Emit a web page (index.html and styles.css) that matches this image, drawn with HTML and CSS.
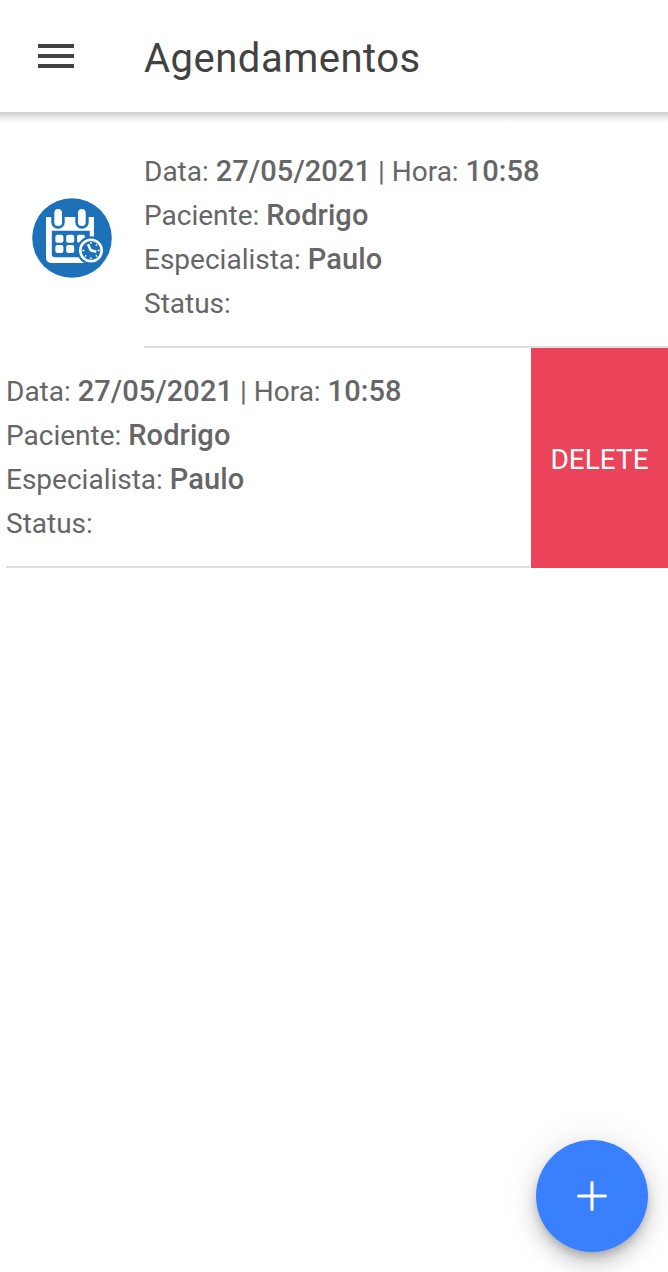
FILE: index.html
```html
<!DOCTYPE html>
<html lang="pt-BR">
<head>
<meta charset="utf-8">
<title>Agendamentos</title>
<link rel="stylesheet" href="styles.css">
</head>
<body>
<header class="toolbar">
  <button class="menu-button" aria-label="Menu">
    <svg width="36" height="24" viewBox="0 0 36 24"><path d="M0 0h36v4H0zM0 10h36v4H0zM0 20h36v4H0z"/></svg>
  </button>
  <h1 class="title">Agendamentos</h1>
</header>
<main class="list">
  <section class="item">
    <div class="avatar">
      <svg width="80" height="80" viewBox="0 0 80 80">
        <circle cx="40" cy="40" r="39.8" fill="#1d71b8"/>
        <path d="M14 19h48v46H19a5 5 0 0 1-5-5z" fill="#fff"/>
        <path d="M19.800 32.700h38v26.600H22.800a3 3 0 0 1-3-3z" fill="#1d71b8"/>
        <rect x="19.300" y="8" width="13.400" height="22.700" rx="6.500" fill="#1d71b8"/>
        <rect x="43.300" y="8" width="13.400" height="22.700" rx="6.500" fill="#1d71b8"/>
        <rect x="22.300" y="11" width="7.700" height="17" rx="3.850" fill="#fff"/>
        <rect x="46" y="11" width="7.700" height="17" rx="3.850" fill="#fff"/>
        <g fill="#fff">
          <rect x="23.400" y="36.700" width="8" height="8" rx="2"/>
          <rect x="34.200" y="36.700" width="8" height="8" rx="2"/>
          <rect x="45" y="36.700" width="8" height="8" rx="2"/>
          <rect x="23.400" y="47" width="8" height="8" rx="2"/>
          <rect x="34.200" y="47" width="8" height="8" rx="2"/>
        </g>
        <circle cx="59" cy="52.500" r="14.200" fill="#1d71b8"/>
        <circle cx="59" cy="52.500" r="10.700" fill="none" stroke="#fff" stroke-width="2.600"/>
        <path d="M56 46.300l2.700 5.900 5.600 1.500" fill="none" stroke="#fff" stroke-width="2.500"/>
        <path d="M59 44v2M59 59.200v2M50.300 52.500h2M65.700 52.500h2M52.900 58.600l1.300-1.300M63.800 57.300l1.300 1.300M63.800 47.700l1.300-1.300" stroke="#fff" stroke-width="1.300"/>
      </svg>
    </div>
    <div class="details">
      <p>Data: <b>27/05/2021</b> | Hora: <b>10:58</b></p>
      <p>Paciente: <b>Rodrigo</b></p>
      <p>Especialista: <b>Paulo</b></p>
      <p>Status:</p>
    </div>
  </section>
  <section class="item item-open">
    <div class="details">
      <p>Data: <b>27/05/2021</b> | Hora: <b>10:58</b></p>
      <p>Paciente: <b>Rodrigo</b></p>
      <p>Especialista: <b>Paulo</b></p>
      <p>Status:</p>
    </div>
    <button class="delete">DELETE</button>
  </section>
</main>
<button class="fab" aria-label="Adicionar">
  <svg width="32" height="32" viewBox="0 0 32 32"><path d="M16 2.500v27M2.500 16h27" fill="none" stroke="#fff" stroke-width="3" stroke-linecap="round"/></svg>
</button>
</body>
</html>
```
FILE: styles.css
```css
* { box-sizing: border-box; }

body {
  margin: 0;
  height: 1272px;
  overflow: hidden;
  background: #fff;
  font-family: Roboto, "Liberation Sans", sans-serif;
}

button {
  border: 0;
  padding: 0;
  background: none;
  font: inherit;
}

.toolbar {
  position: relative;
  display: flex;
  align-items: center;
  height: 112px;
  padding-left: 38px;
  color: #424242;
}

.toolbar::after {
  content: "";
  position: absolute;
  top: 100%;
  left: 0;
  right: 0;
  height: 12px;
  background: linear-gradient(#d0d0d0, #d8d8d8 20%, #ececec 50%, #f9f9f9 75%, #fff);
}

.menu-button {
  display: flex;
  width: 106px;
}

.menu-button svg { fill: #424242; }

.title {
  margin: 6px 0 0;
  font-size: 40px;
  font-weight: 400;
  line-height: 48px;
  letter-spacing: .5px;
}

.list { padding-top: 16px; }

.item {
  display: flex;
  height: 220px;
}

.item-open { padding-left: 6px; }

.avatar {
  display: flex;
  align-items: center;
  width: 144px;
  padding-left: 32px;
}

.details {
  flex: 1;
  padding-top: 22px;
  border-bottom: 2px solid #dedede;
  color: #666;
  font-size: 28px;
  line-height: 44px;
  white-space: nowrap;
}

.details p {
  height: 44px;
  margin: 0;
}

.details b {
  font-size: 29px;
  font-weight: 500;
  line-height: 1;
  letter-spacing: .08px;
}

.delete {
  width: 137px;
  margin-left: 1px;
  padding-top: 2px;
  background: #eb445a;
  color: #fff;
  font-size: 28px;
}

.fab {
  position: absolute;
  top: 1140px;
  left: 536px;
  display: flex;
  align-items: center;
  justify-content: center;
  width: 112px;
  height: 112px;
  border-radius: 50%;
  background: #3880ff;
  box-shadow: 0 6px 10px -2px rgba(0, 0, 0, .2), 0 12px 20px rgba(0, 0, 0, .14), 0 2px 36px rgba(0, 0, 0, .12);
}
```
